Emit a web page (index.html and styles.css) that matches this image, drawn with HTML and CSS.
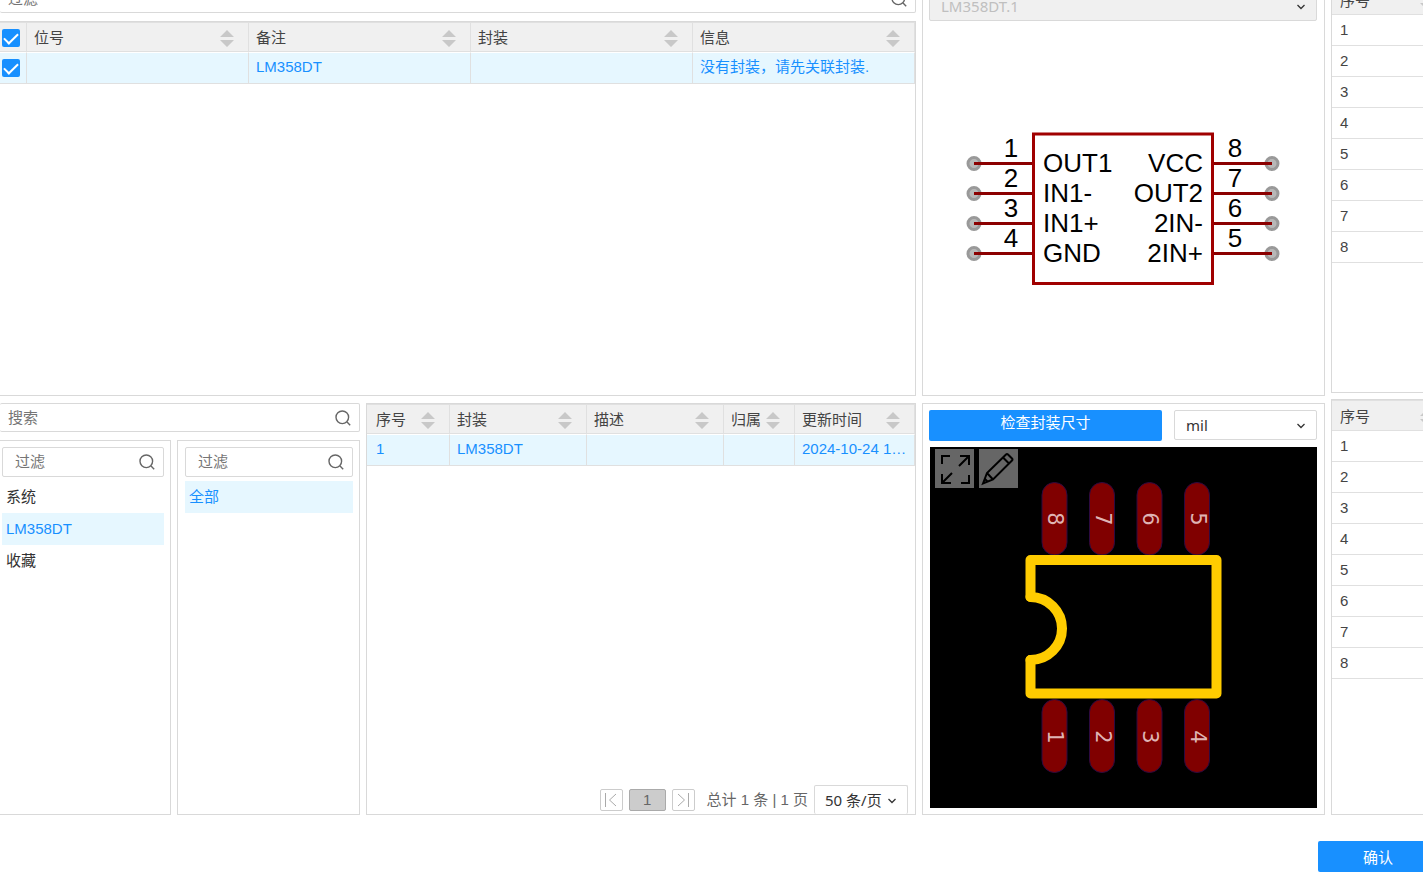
FILE: index.html
```html
<!DOCTYPE html>
<html lang="zh-CN">
  <head>
    <meta charset="utf-8" />
    <meta name="viewport" content="width=device-width,initial-scale=1.0" />
    <title>封装管理器</title>
    <link rel="stylesheet" href="styles.css">
  </head>

  <body>
    <!-- Shared icons -->
    <svg class="sprite" aria-hidden="true">
      <symbol id="icon-search" viewBox="0 0 16 16">
        <circle cx="7.3" cy="7.3" r="6.3" />
        <path d="M12 12l3.2 3.2" />
      </symbol>
      <symbol id="icon-sort" viewBox="0 0 14 18">
        <path d="M7 1l7 7H0zM0 11h14l-7 7z" />
      </symbol>
      <symbol id="icon-down" viewBox="0 0 8 6">
        <path d="M0.5 1L4 4.5L7.5 1" />
      </symbol>
    </svg>

    <main>
      <!-- Components and footprint library -->
      <div class="column column-list">
        <section class="half">
          <label class="search search-flush">
            <input type="text" placeholder="过滤" aria-label="过滤" />
            <svg><use href="#icon-search" /></svg>
          </label>
          <div class="panel panel-flush">
            <table class="grid-table">
              <colgroup>
                <col class="col-check" />
                <col /><col /><col /><col />
              </colgroup>
              <thead>
                <tr>
                  <th class="check"><input type="checkbox" checked aria-label="全选" /></th>
                  <th><div class="head">位号<svg><use href="#icon-sort" /></svg></div></th>
                  <th><div class="head">备注<svg><use href="#icon-sort" /></svg></div></th>
                  <th><div class="head">封装<svg><use href="#icon-sort" /></svg></div></th>
                  <th><div class="head">信息<svg><use href="#icon-sort" /></svg></div></th>
                </tr>
              </thead>
              <tbody>
                <tr class="selected">
                  <td class="check"><input type="checkbox" checked aria-label="LM358DT" /></td>
                  <td></td>
                  <td>LM358DT</td>
                  <td></td>
                  <td>没有封装，请先关联封装.</td>
                </tr>
              </tbody>
            </table>
          </div>
        </section>

        <section class="half library">
          <div class="library-nav">
            <label class="search search-flush">
              <input type="text" placeholder="搜索" aria-label="搜索" />
              <svg><use href="#icon-search" /></svg>
            </label>
            <div class="trees">
              <div class="panel panel-flush tree tree-owner">
                <label class="search search-inner">
                  <input type="text" placeholder="过滤" aria-label="过滤库" />
                  <svg><use href="#icon-search" /></svg>
                </label>
                <ul>
                  <li>系统</li>
                  <li class="active">LM358DT</li>
                  <li>收藏</li>
                </ul>
              </div>
              <div class="panel tree tree-class">
                <label class="search search-inner">
                  <input type="text" placeholder="过滤" aria-label="过滤分类" />
                  <svg><use href="#icon-search" /></svg>
                </label>
                <ul>
                  <li class="active">全部</li>
                </ul>
              </div>
            </div>
          </div>

          <div class="panel results">
            <table class="grid-table">
              <colgroup>
                <col class="col-index" />
                <col class="col-name" />
                <col class="col-name" />
                <col class="col-owner" />
                <col />
              </colgroup>
              <thead>
                <tr>
                  <th><div class="head">序号<svg><use href="#icon-sort" /></svg></div></th>
                  <th><div class="head">封装<svg><use href="#icon-sort" /></svg></div></th>
                  <th><div class="head">描述<svg><use href="#icon-sort" /></svg></div></th>
                  <th><div class="head">归属<svg><use href="#icon-sort" /></svg></div></th>
                  <th><div class="head">更新时间<svg><use href="#icon-sort" /></svg></div></th>
                </tr>
              </thead>
              <tbody>
                <tr class="selected">
                  <td>1</td>
                  <td>LM358DT</td>
                  <td></td>
                  <td></td>
                  <td>2024-10-24 1…</td>
                </tr>
              </tbody>
            </table>
            <div class="pager">
              <button class="page-button" aria-label="第一页">
                <svg viewBox="0 0 14 14"><path d="M1.5 0v14M12 1L5.500 7L12 13" /></svg>
              </button>
              <button class="page-button current">1</button>
              <button class="page-button" aria-label="最后一页">
                <svg viewBox="0 0 14 14"><path d="M12.5 0v14M2 1L8.500 7L2 13" /></svg>
              </button>
              <span class="total">总计 1 条 | 1 页</span>
              <div class="select select-page">
                <select aria-label="每页条数"><option>50 条/页</option></select>
                <svg><use href="#icon-down" /></svg>
              </div>
            </div>
          </div>
        </section>
      </div>

      <!-- Symbol and footprint previews -->
      <div class="column column-preview">
        <section class="half panel preview">
          <div class="select">
            <select disabled aria-label="符号"><option>LM358DT.1</option></select>
            <svg><use href="#icon-down" /></svg>
          </div>
          <svg class="symbol" viewBox="0 0 388 368" role="img" aria-label="LM358DT">
            <g class="pin-ends">
              <circle cx="45" cy="142.500" r="6" />
              <circle cx="45" cy="172.500" r="6" />
              <circle cx="45" cy="202.500" r="6" />
              <circle cx="45" cy="232.500" r="6" />
              <circle cx="343" cy="142.500" r="6" />
              <circle cx="343" cy="172.500" r="6" />
              <circle cx="343" cy="202.500" r="6" />
              <circle cx="343" cy="232.500" r="6" />
            </g>
            <path class="pin-lines" d="M45 142.500h60M45 172.500h60M45 202.500h60M45 232.500h60M284 142.500h59M284 172.500h59M284 202.500h59M284 232.500h59" />
            <rect class="body" x="104.500" y="113" width="179" height="149.500" />
            <g class="pin-number">
              <text x="82" y="136">1</text>
              <text x="82" y="166">2</text>
              <text x="82" y="196">3</text>
              <text x="82" y="226">4</text>
              <text x="306" y="136">8</text>
              <text x="306" y="166">7</text>
              <text x="306" y="196">6</text>
              <text x="306" y="226">5</text>
            </g>
            <g>
              <text x="114" y="151">OUT1</text>
              <text x="114" y="181">IN1-</text>
              <text x="114" y="211">IN1+</text>
              <text x="114" y="241">GND</text>
            </g>
            <g class="pin-right">
              <text x="274" y="151">VCC</text>
              <text x="274" y="181">OUT2</text>
              <text x="274" y="211">2IN-</text>
              <text x="274" y="241">2IN+</text>
            </g>
          </svg>
        </section>

        <section class="half panel preview">
          <div class="preview-bar">
            <button class="check-size">检查封装尺寸</button>
            <div class="select select-unit">
              <select aria-label="单位"><option>mil</option></select>
              <svg><use href="#icon-down" /></svg>
            </div>
          </div>
          <div class="canvas">
            <svg class="footprint" viewBox="0 0 387 361" role="img" aria-label="LM358DT">
              <g class="pads">
                <rect x="112" y="35.500" width="25" height="72.500" rx="12.500" />
                <rect x="159.500" y="35.500" width="25" height="72.500" rx="12.500" />
                <rect x="207" y="35.500" width="25" height="72.500" rx="12.500" />
                <rect x="254.500" y="35.500" width="25" height="72.500" rx="12.500" />
                <rect x="112" y="252.500" width="25" height="73" rx="12.500" />
                <rect x="159.500" y="252.500" width="25" height="73" rx="12.500" />
                <rect x="207" y="252.500" width="25" height="73" rx="12.500" />
                <rect x="254.500" y="252.500" width="25" height="73" rx="12.500" />
              </g>
              <path class="outline" d="M100.500 150V113H286.500V246.500H100.500V213" />
              <path class="outline" d="M100.500 150A31.500 31.500 0 0 1 100.500 213" />
              <g class="pad-number">
                <text transform="translate(118 72) rotate(90)">8</text>
                <text transform="translate(166 72) rotate(90)">7</text>
                <text transform="translate(213 72) rotate(90)">6</text>
                <text transform="translate(261 72) rotate(90)">5</text>
                <text transform="translate(118 290) rotate(90)">1</text>
                <text transform="translate(166 290) rotate(90)">2</text>
                <text transform="translate(213 290) rotate(90)">3</text>
                <text transform="translate(261 290) rotate(90)">4</text>
              </g>
            </svg>
            <div class="tools">
              <button aria-label="全屏">
                <svg viewBox="0 0 39 39">
                  <path d="M7 15V7h8M34 26v8h-8M24 17L34 7M25 7H34V16M17 24L7 34M7 25v9h9" />
                </svg>
              </button>
              <button aria-label="编辑">
                <svg viewBox="0 0 39 39">
                  <path d="M4 34.500L8 24L27 5.500Q28 4.500 29 5.500L33 9.500Q34 10.500 33 11.500L14 30.500ZM8 24L14 30.500M24 8.500L30 14.500M5.500 29.500L9 33" />
                </svg>
              </button>
            </div>
          </div>
        </section>
      </div>

      <!-- Pin lists -->
      <div class="column column-pins">
        <div class="panel pins pins-symbol">
          <table class="grid-table">
            <thead>
              <tr><th><div class="head">序号<svg><use href="#icon-sort" /></svg></div></th></tr>
            </thead>
            <tbody>
              <tr><td>1</td></tr>
              <tr><td>2</td></tr>
              <tr><td>3</td></tr>
              <tr><td>4</td></tr>
              <tr><td>5</td></tr>
              <tr><td>6</td></tr>
              <tr><td>7</td></tr>
              <tr><td>8</td></tr>
            </tbody>
          </table>
        </div>
        <div class="panel pins pins-footprint">
          <table class="grid-table">
            <thead>
              <tr><th><div class="head">序号<svg><use href="#icon-sort" /></svg></div></th></tr>
            </thead>
            <tbody>
              <tr><td>1</td></tr>
              <tr><td>2</td></tr>
              <tr><td>3</td></tr>
              <tr><td>4</td></tr>
              <tr><td>5</td></tr>
              <tr><td>6</td></tr>
              <tr><td>7</td></tr>
              <tr><td>8</td></tr>
            </tbody>
          </table>
        </div>
      </div>
    </main>

    <footer>
      <button class="confirm">确认</button>
    </footer>
  </body>
</html>
```

FILE: styles.css
```css
* {
  box-sizing: border-box;
}
body {
  display: flex;
  flex-direction: column;
  height: 100vh;
  margin: 0;
  overflow: hidden;
  background: #fff;
  color: #444;
  font-family: "Liberation Sans", "Noto Sans CJK SC", sans-serif;
  font-size: 15px;
  line-height: 20px;
}
button,
input,
select {
  margin: 0;
  padding: 0;
  color: inherit;
  font: inherit;
}
button {
  border: none;
  cursor: pointer;
}
ul {
  margin: 0;
  padding: 0;
  list-style: none;
}
.sprite {
  display: none;
}

/* layout: the dialog runs past the top and right edges */
main {
  flex: 1;
  display: grid;
  grid-template-columns: 916fr 403fr 92fr;
  gap: 6px;
  min-height: 0;
  margin-top: -16px;
}
.column {
  display: flex;
  flex-direction: column;
  gap: 7px;
  min-width: 0;
  min-height: 0;
}
.half {
  flex: 1 1 0;
  display: flex;
  flex-direction: column;
  gap: 8px;
  min-height: 0;
}
.panel {
  border: 1px solid #d9d9d9;
  overflow: hidden;
}
.panel-flush {
  flex: 1;
  border-left: none;
}

/* text boxes */
.search {
  display: flex;
  align-items: center;
  height: 29px;
  padding: 0 8px;
  border: 1px solid #d9d9d9;
  border-radius: 2px;
}
.search-flush {
  border-left: none;
}
.search input {
  flex: 1;
  min-width: 0;
  border: none;
  outline: none;
  background: none;
}
.search input::placeholder {
  color: #757575;
  opacity: 1;
}
.search svg {
  width: 16px;
  height: 16px;
  fill: none;
  stroke: #666;
  stroke-width: 1.4;
}
.search-inner {
  height: 30px;
  padding: 0 8px 0 12px;
  margin-bottom: 4px;
}

/* drop-downs */
.select {
  position: relative;
  font-family: "Noto Sans", "Noto Sans CJK SC", sans-serif;
}
.select select {
  display: block;
  width: 100%;
  height: 30px;
  padding: 0 11px;
  border: 1px solid #d9d9d9;
  border-radius: 2px;
  background: #fff;
  color: #333;
  appearance: none;
}
.select select:disabled {
  background: #f0f0f0;
  color: #bfbfbf;
  opacity: 1;
}
.select svg {
  position: absolute;
  top: 13px;
  right: 12px;
  width: 8px;
  height: 6px;
  fill: none;
  stroke: #333;
  stroke-width: 1.3;
  pointer-events: none;
}

/* tables */
.grid-table {
  width: 100%;
  table-layout: fixed;
  border-collapse: separate;
  border-spacing: 0;
}
.grid-table th {
  height: 30px;
  padding: 1px 14px 0 7px;
  border-top: 1px solid #e0e0e0;
  border-right: 1px solid #e0e0e0;
  border-bottom: 1px solid #e0e0e0;
  background: #f0f0f0;
  font-weight: inherit;
  text-align: left;
  white-space: nowrap;
}
.grid-table td {
  height: 32px;
  padding: 0 4px 2px 7px;
  border-top: 1px solid #fff;
  border-right: 1px solid #e0e0e0;
  border-bottom: 1px solid #e0e0e0;
  overflow: hidden;
  text-overflow: ellipsis;
  white-space: nowrap;
}
.selected td {
  background: #e6f7ff;
  background-clip: padding-box;
  color: #1890ff;
}
.head {
  display: flex;
  align-items: center;
  justify-content: space-between;
}
.head svg {
  flex: none;
  width: 14px;
  height: 18px;
  fill: #c8c8c8;
}
.col-check {
  width: 27px;
}
.col-index {
  width: 83px;
}
.col-name {
  width: 25%;
}
.col-owner {
  width: 71px;
}
.grid-table .check {
  padding: 0 0 0 2px;
}
.grid-table th.check {
  padding-top: 2px;
}
.check input {
  display: block;
  width: 18px;
  height: 18px;
  border-radius: 2px;
  background: #1890ff;
  appearance: none;
}
.check input::after {
  content: "";
  display: block;
  width: 12px;
  height: 6px;
  margin: 0 auto;
  border-left: 2px solid #fff;
  border-bottom: 2px solid #fff;
  transform: translateY(4px) rotate(-45deg);
}

/* footprint library */
.library {
  flex-direction: row;
  gap: 6px;
}
.library-nav {
  flex: 360 1 0;
  display: flex;
  flex-direction: column;
  gap: 8px;
  min-width: 0;
}
.trees {
  flex: 1;
  display: flex;
  gap: 6px;
}
.tree {
  padding: 6px;
  color: #333;
}
.tree-owner {
  flex: 162 1 0;
  padding-left: 2px;
}
.tree-class {
  flex: 168 1 0;
  padding-left: 7px;
}
.tree li {
  padding: 6px 4px;
}
.tree .active {
  background: #e6f7ff;
  color: #1890ff;
}
.results {
  flex: 548 1 0;
  display: flex;
  flex-direction: column;
  min-width: 0;
}
.results th:first-child,
.results td:first-child {
  padding-left: 9px;
}
.pager {
  display: flex;
  align-items: center;
  justify-content: flex-end;
  gap: 6px;
  height: 29px;
  margin-top: auto;
  padding-right: 7px;
}
.page-button {
  display: flex;
  align-items: center;
  justify-content: center;
  width: 23px;
  height: 22px;
  border: 1px solid #ccc;
  border-radius: 2px;
  background: #fff;
  color: #666;
}
.page-button svg {
  width: 14px;
  height: 14px;
  fill: none;
  stroke: #aaa;
}
.page-button.current {
  width: 37px;
  border-color: #aaa;
  background: #ccc;
}
.total {
  padding-left: 6px;
  color: #666;
}
.select-page {
  width: 94px;
}
.select-page select {
  height: 29px;
  padding: 0 10px;
  border-bottom: none;
}

/* previews */
.preview {
  gap: 6px;
  padding: 6px 7px 6px 6px;
}
.preview-bar {
  display: flex;
  gap: 12px;
}
.check-size {
  flex: 233 1 0;
  height: 31px;
  padding-bottom: 5px;
  border-radius: 2px;
  background: #1890ff;
  color: #fff;
}
.select-unit {
  flex: 143 1 0;
}
.symbol {
  flex: 1;
  min-height: 0;
  margin-top: -6px;
  font-size: 26px;
}
.pin-ends {
  fill: #b8b8b8;
  stroke: #999;
  stroke-width: 3;
}
.pin-lines {
  stroke: #8b0000;
  stroke-width: 3;
}
.body {
  fill: none;
  stroke: #a00000;
  stroke-width: 3;
}
.symbol text {
  fill: #000;
}
.pin-number {
  text-anchor: middle;
}
.pin-right {
  text-anchor: end;
}
.canvas {
  position: relative;
  flex: 1;
  min-height: 0;
  margin-left: 1px;
  background: #000;
}
.footprint {
  display: block;
  width: 100%;
  height: 100%;
}
.pads {
  fill: #800000;
  stroke: #2c0a40;
}
.outline {
  fill: none;
  stroke: #fc0;
  stroke-width: 10;
  stroke-linecap: round;
  stroke-linejoin: round;
}
.pad-number {
  fill: #dfb4b4;
  font-family: "DejaVu Sans", sans-serif;
  font-size: 21px;
  text-anchor: middle;
}
.tools {
  position: absolute;
  top: 2px;
  left: 5px;
  display: flex;
  gap: 5px;
}
.tools button {
  width: 39px;
  height: 39px;
  background: #666;
}
.tools svg {
  display: block;
  fill: none;
  stroke: #000;
  stroke-width: 2;
}

/* pin lists */
.column-pins {
  gap: 6px;
  margin-top: -1px;
}
.pins {
  border-right: none;
}
.pins-symbol {
  flex: 410 1 0;
}
.pins-footprint {
  flex: 416 1 0;
}
.pins .grid-table {
  width: 117px;
}
.pins th,
.pins td {
  height: 31px;
  padding-left: 8px;
}
.pins th {
  padding-top: 2px;
}

footer {
  display: flex;
  justify-content: flex-end;
  padding-top: 26px;
}
.confirm {
  width: 120px;
  height: 31px;
  margin-right: -15px;
  padding-top: 3px;
  border-radius: 2px;
  background: #1890ff;
  color: #fff;
}
```
